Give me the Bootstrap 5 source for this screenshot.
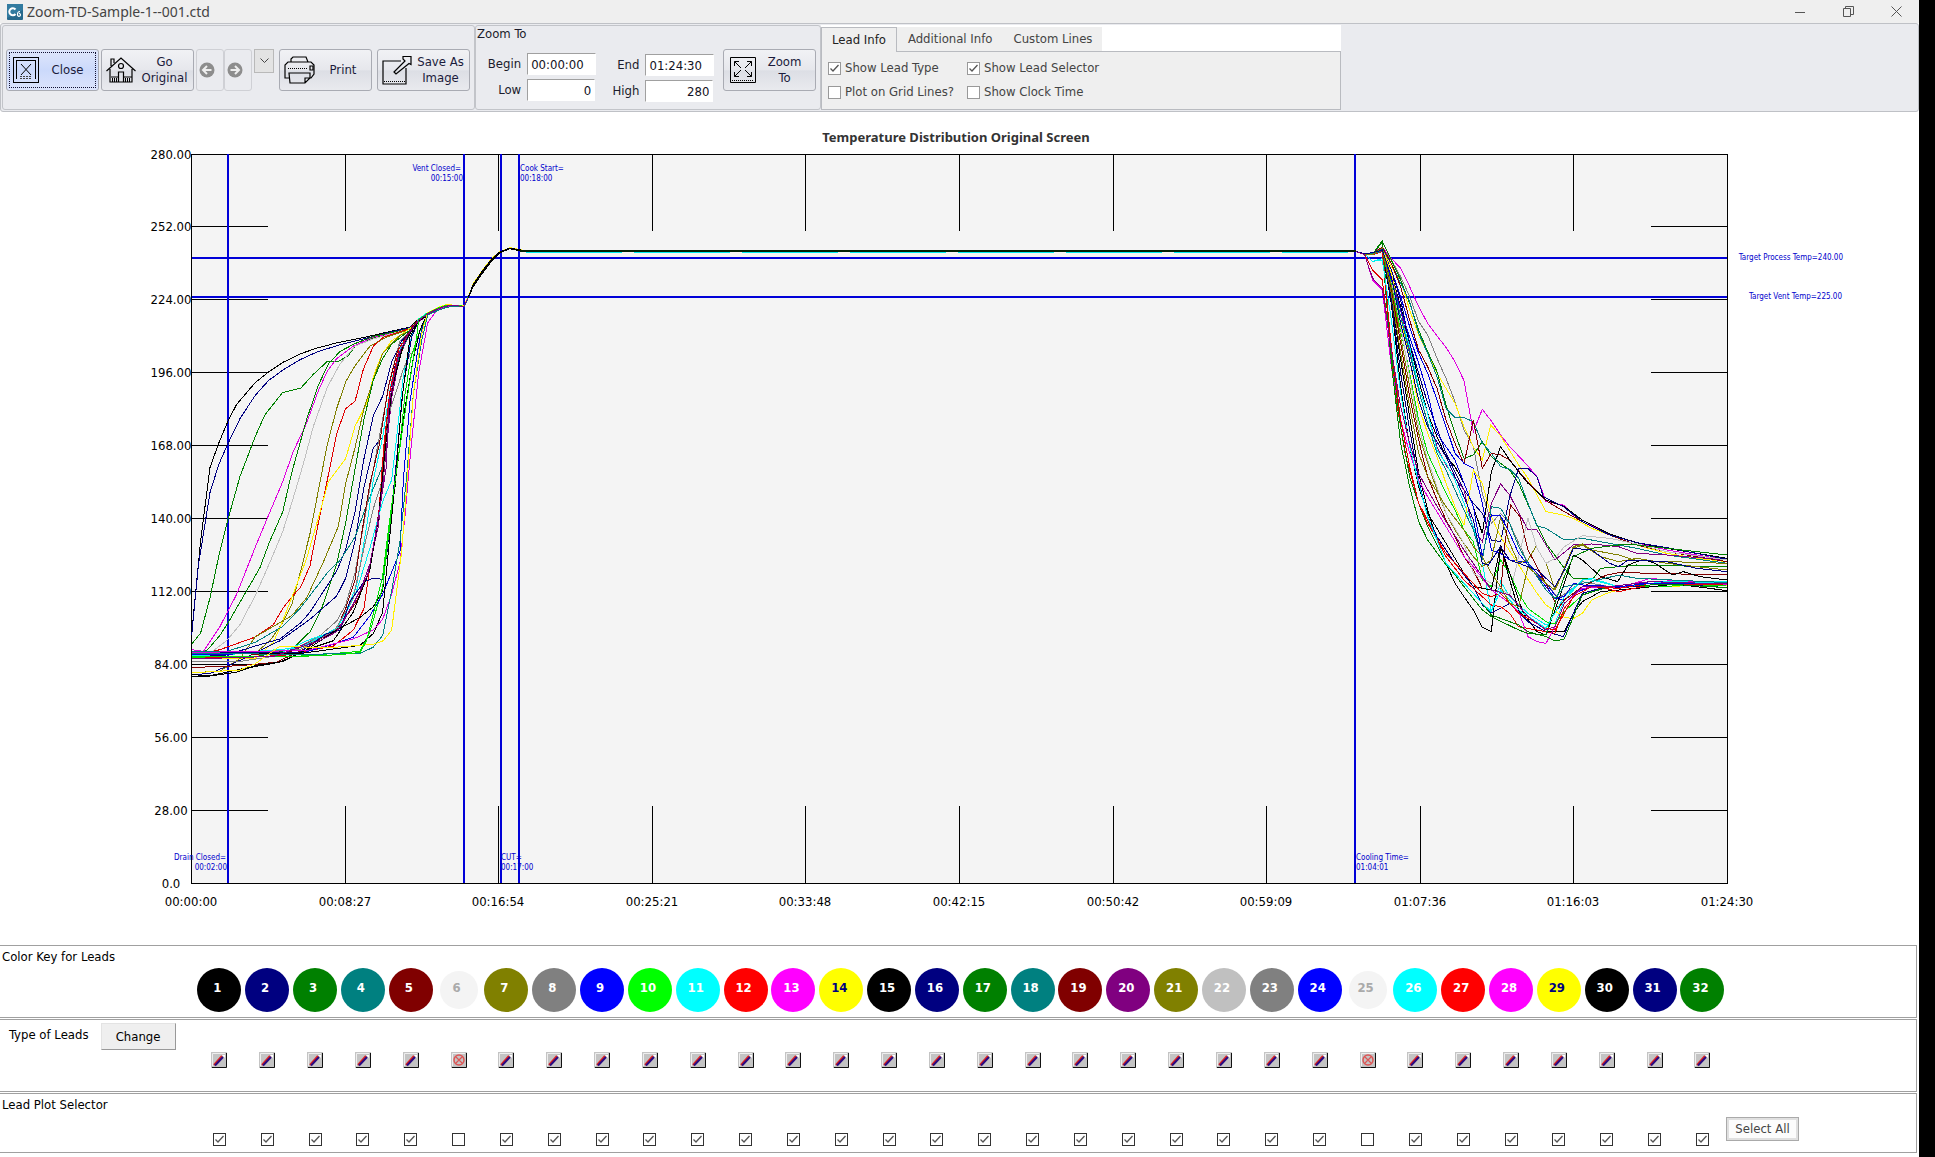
<!DOCTYPE html>
<html lang="en">
<head>
<meta charset="utf-8">
<meta name="viewport" content="width=device-width, initial-scale=1">
<title>Zoom-TD-Sample-1--001.ctd</title>
<link href="https://cdn.jsdelivr.net/npm/bootstrap@5.3.0/dist/css/bootstrap.min.css" rel="stylesheet">
<style>
body{background:#000;font-family:"DejaVu Sans Condensed","Noto Sans",sans-serif;font-size:13px;line-height:16px;color:#1b1b2b}
.app{background:#fff;margin-right:16px;min-height:100vh}
.titlebar{background:#efefef;height:23px;padding:0 16px 0 7px;font-family:"Noto Sans",sans-serif;font-size:14px;line-height:23px;color:#444}
.titlebar .win{gap:36px}
.titlebar button{border:0;background:none;padding:0;width:12px;height:18px;display:flex;align-items:center}
.toolbar{background:#eaebef;border:1px solid #bfc1c6;border-radius:3px;height:89px;padding:1px}
.group{border:1px solid #c2c4c9;border-radius:3px;height:85px}
.g-main{width:473px;padding:23px 0 0 3px}
.g-zoom{width:346px;padding:0 4px 0 1px}
.tool{height:42px;width:93px;border:1px solid #a9abb3;border-radius:3px;background:linear-gradient(#f1f2f5,#e6e7ec 50%,#dcdee5 52%,#e9eaee);padding:0 6px;display:flex;align-items:center;color:#1b1b3b;gap:4px}
.tool span{flex:1;text-align:center}
.tool svg{flex:none}
.tool.focus{background:linear-gradient(#dfe6fb,#cbd9fb 50%,#dce4fc);outline:1px dotted #113;outline-offset:-4px}
.tool.wide-ic{padding:0 4px}
.sp-s{margin-right:2px}
.sp-l{margin-right:5px}
.nav-b{width:28px;height:42px;border:1px solid #cfd0d5;border-radius:3px;background:#eaebef;padding:0;display:flex;align-items:center;justify-content:center}
.nav-b svg{margin-right:6px}
.drop{width:20px;height:24px;border:1px solid #b9b9b9;background:#e3e3e3;padding:0;display:flex;align-items:center;justify-content:center}
.fld{width:69px;height:22px;border:1px solid #fff;border-top-color:#a0a0a0;border-left-color:#a0a0a0;background:#fff;padding:0 3px;color:#112;font-size:13px;border-radius:0}
.fld.num{text-align:right;width:68px}
.fcol{display:grid;grid-template-columns:auto auto;gap:4px 6px;align-items:center;text-align:right;align-content:start}
.f1{width:130px;margin-top:11px}
.f2{width:113px;margin-top:12px}
.g-zoom .tool{margin-top:7px}
.tabs{width:520px;height:85px;background:#fff;padding-top:2px;color:#444}
.tabs .nav-link{background:#efefef;color:#444;padding:0 10px 0 11px;height:24px;line-height:23px;border:0;border-radius:0}
.tabs .nav-link.active{border:1px solid #b9bbc0;border-bottom:0;color:#222;padding:0 10px;height:25px;margin-bottom:-1px;background:#efefef;position:relative}
.tabs .pane{background:#efefef;border:1px solid #b9bbc0;height:59px;padding:8px 6px;display:grid;grid-template-columns:139px auto;gap:8px 0;align-content:start}
.ck{display:flex;align-items:center;gap:4px;white-space:nowrap}
input[type=checkbox]{appearance:none;width:13px;height:13px;margin:0;border:1px solid #999;background:#fff;flex:none}
input[type=checkbox]:checked{background:#fff url("data:image/svg+xml,%3Csvg xmlns='http://www.w3.org/2000/svg' viewBox='0 0 11 11'%3E%3Cpath d='M1.5 5.5l2.5 2.5L9.5 2' fill='none' stroke='%23555' stroke-width='1.3'/%3E%3C/svg%3E")}
.chart{display:block;width:100%;height:auto}
.chart text{font-size:13px;fill:#000}
.chart .ttl{font-weight:bold;font-size:13px;fill:#333;font-family:"Noto Sans",sans-serif}
.chart .note{font-size:8px;fill:#00c;font-family:"DejaVu Sans Condensed",sans-serif}
.grid-l{stroke:#000;shape-rendering:crispEdges}
.ev{stroke:#0000d8;stroke-width:2;shape-rendering:crispEdges}
.trace{fill:none;stroke-width:1;vector-effect:non-scaling-stroke;shape-rendering:crispEdges}
.panel{border:1px solid #a0a0a0;border-left:0;margin-right:2px;color:#000}
.p-key{height:73px;margin-bottom:1px}.p-type{height:73px;margin-bottom:1px}.p-sel{height:60px}
.panel .cap{height:22px;padding:3px 2px}
.p-type .cap{height:32px;padding:3px 9px;display:flex;gap:12px;align-items:flex-start}
.p-type .cap span{padding-top:4px}
.leads{display:grid;grid-template-columns:repeat(32,1fr);margin-left:10.2%;margin-right:9.9%;justify-items:center;align-items:center}
.dot{width:44px;height:44px;border-radius:50%;color:#fff;font-weight:bold;font-size:13px;line-height:40px;text-align:center;padding-right:4px}
.dot.off{width:38px;height:38px;background:#f4f4f4;color:#aaa;line-height:34px}
.type-b{width:16px;height:16px;padding:0;border:0;background:none;display:block;line-height:0}
.p-sel input{border-color:#333}
.btn-old{border:1px solid #e3e3e3;border-right-color:#999;border-bottom-color:#999;background:#efefef;width:75px;height:27px;font-size:13px;padding:0}
.btn-all{border:1px solid #aaa;box-shadow:inset 0 0 0 2px #e0e0e0;background:#fcfcfc;width:73px;height:24px;padding:0;color:#444;font-size:13px;margin-top:1px}
.sel-row{display:grid;grid-template-columns:minmax(0,1fr)}
.sel-row>*{grid-area:1/1}
.sel-row .btn-all{justify-self:end;margin-right:117px}
.sel-row .leads{margin-top:17px}
</style>
<script src="https://cdn.jsdelivr.net/npm/bootstrap@5.3.0/dist/js/bootstrap.bundle.min.js"></script>
</head>
<body>
<div class="app">
<header class="titlebar d-flex align-items-center">
<svg width="16" height="16" viewBox="0 0 16 16" class="me-1" aria-hidden="true"><rect width="16" height="16" rx="1" fill="#27698c"/><path d="M0 0h16v6L0 14z" fill="#327ba0"/><path d="M8.500 5.500A3.500 3.500 0 1 0 8.500 10" fill="none" stroke="#fff" stroke-width="2"/><path d="M13 7.500c-2 0-2.500 1.500-2.500 3a1.500 1.500 0 1 0 1.500-1.200" fill="none" stroke="#fff" stroke-width="1.200"/></svg>
<span class="me-auto">Zoom-TD-Sample-1--001.ctd</span>
<div class="win d-flex">
<button aria-label="Minimize"><svg width="11" height="11"><path d="M0 6.500h10" stroke="#555"/></svg></button>
<button aria-label="Restore"><svg width="11" height="11" fill="none" stroke="#555"><path d="M.5 2.500h7v8h-7zM2.500 2.500v-2h8v8h-3"/></svg></button>
<button aria-label="Close window"><svg width="11" height="11" stroke="#555"><path d="M.5.5l10 10M10.500.5l-10 10"/></svg></button>
</div>
</header>
<div class="toolbar d-flex">
<div class="group g-main d-flex align-items-start">
<button class="tool focus sp-s"><svg width="26" height="26" viewBox="0 0 26 26" fill="none" stroke="#000" shape-rendering="crispEdges"><path d="M.5.5h25v25H.5z"/><path d="M3.500 22V3.500h19V22"/><path d="M8 7l10 11M18 7L8 18" shape-rendering="auto"/><path d="M7 21.500h12M7 19.500h12" stroke-dasharray="2 1" stroke="#444"/></svg><span>Close</span></button>
<button class="tool wide-ic sp-s"><svg width="30" height="26" viewBox="0 0 30 26" fill="none" stroke="#000" stroke-width="1.200"><path d="M.5 14L15 1l14.500 13M4 12v13h22V12M5 9V2h3v4M12.500 25V15h5v10"/><circle cx="15" cy="9" r="2.500"/><path d="M5 20h7m6 0h8"/><path d="M6 23h6m7 0h6" stroke-width="4" stroke-dasharray="1 1"/></svg><span>Go Original</span></button>
<button class="nav-b" aria-label="Back"><svg width="16" height="16"><circle cx="8" cy="8" r="7.500" fill="#8d8d8d"/><path d="M12.500 8H4.500M8 4L4 8l4 4" fill="none" stroke="#eee" stroke-width="2"/></svg></button>
<button class="nav-b sp-s" aria-label="Forward"><svg width="16" height="16"><circle cx="8" cy="8" r="7.500" fill="#8d8d8d"/><path d="M3.500 8h8M8 4l4 4-4 4" fill="none" stroke="#eee" stroke-width="2"/></svg></button>
<button class="drop sp-l" aria-label="More"><svg width="9" height="6"><path d="M.5.5l4 4 4-4" fill="none" stroke="#444"/></svg></button>
<button class="tool wide-ic sp-l"><svg width="31" height="28" viewBox="0 0 31 28" fill="none" stroke="#000" stroke-width="1.200"><path d="M7 6V3l2-2h13l2 5M7 6h17M5 22H1V9l3-3h23l3 3v9l-3 4h-2M5 17h21v5l-5 5H6zM21 27v-5h5"/><path d="M4 12.500h20" stroke-dasharray="1 1"/><path d="M26 10h3v4h-3z"/></svg><span>Print</span></button>
<button class="tool wide-ic"><svg width="30" height="30" viewBox="0 0 30 30" fill="none" stroke="#000" stroke-width="1.200"><path d="M19 6H1v23h23V13"/><path d="M12 17l11-11-2-2 0-2.500h8v8l-2-1L14 19z"/><path d="M2 26.500h21" stroke-dasharray="1 1"/></svg><span>Save As Image</span></button>
</div>
<div class="group g-zoom">
<div>Zoom To</div>
<div class="d-flex align-items-start">
<div class="fcol f1"><label for="b">Begin</label><input id="b" class="fld" value="00:00:00"><label for="l">Low</label><input id="l" class="fld num" value="0"></div>
<div class="fcol f2"><label for="e">End</label><input id="e" class="fld" value="01:24:30"><label for="h">High</label><input id="h" class="fld num" value="280"></div>
<button class="tool ms-auto"><svg width="26" height="26" viewBox="0 0 26 26" fill="none" stroke="#000"><path d="M.5.5h25v25H.5z"/><path d="M4.500 9V4.500H9M4.500 4.500L11 11M17 4.500h4.500V9M21.500 4.500L15 11M4.500 15v4.500H9M4.500 19.500L11 13M21.500 15v4.500H17M21.500 19.500L15 13"/><path d="M2 23.500h22" stroke-dasharray="1 1"/></svg><span>Zoom To</span></button>
</div>
</div>
<div class="tabs">
<nav class="nav flex-nowrap"><a class="nav-link active" href="#">Lead Info</a><a class="nav-link" href="#">Additional Info</a><a class="nav-link" href="#">Custom Lines</a></nav>
<div class="pane"><label class="ck"><input type="checkbox" checked>Show Lead Type</label><label class="ck"><input type="checkbox" checked>Show Lead Selector</label><label class="ck"><input type="checkbox">Plot on Grid Lines?</label><label class="ck"><input type="checkbox">Show Clock Time</label></div>
</div>
</div>
<main>
<svg class="chart" id="chart" viewBox="0 112 1919 833" role="img" aria-label="Temperature Distribution Original Screen">
<text class="ttl" x="956" y="142" text-anchor="middle">Temperature Distribution Original Screen</text>
<rect x="191.500" y="154.500" width="1536" height="729" fill="#f4f4f4" class="grid-l"/>
<g id="axes"></g>
<g class="ev"><path d="M228 154v729M464 154v729M501 154v729M519 154v729M1355 154v729M192 258H1727M192 297H1727"/></g>
<g id="left" transform="translate(140 130) scale(.33333 .35714)"></g>
<g id="right" transform="translate(1330 220) scale(.33333)"></g>
<g id="plateau"></g>
<g>
<text class="note" x="461" y="171" text-anchor="end">Vent Closed=</text><text class="note" x="463" y="181" text-anchor="end">00:15:00</text>
<text class="note" x="520" y="171">Cook Start=</text><text class="note" x="520" y="181">00:18:00</text>
<text class="note" x="226" y="860" text-anchor="end">Drain Closed=</text><text class="note" x="227" y="870" text-anchor="end">00:02:00</text>
<text class="note" x="501" y="860">CUT=</text><text class="note" x="501" y="870">00:17:00</text>
<text class="note" x="1356" y="860">Cooling Time=</text><text class="note" x="1356" y="870">01:04:01</text>
<text class="note" x="1843" y="260" text-anchor="end">Target Process Temp=240.00</text>
<text class="note" x="1842" y="299" text-anchor="end">Target Vent Temp=225.00</text>
</g>
</svg>
</main>
<section class="panel p-key"><div class="cap">Color Key for Leads</div><div class="leads" id="dots"></div></section>
<section class="panel p-type"><div class="cap"><span>Type of Leads</span><button class="btn-old">Change</button></div><div class="leads" id="types"></div></section>
<section class="panel p-sel"><div class="cap">Lead Plot Selector</div><div class="sel-row"><div class="leads" id="checks"></div><button class="btn-all">Select All</button></div></section>
</div>
<script>
const $=id=>document.getElementById(id);
// lead key
const col=['#000','#000080','#008000','#008080','#800000','','#808000','#808080','#00f','#0f0','#0ff','#f00','#f0f','#ff0','#000','#000080','#008000','#008080','#800000','#800080','#808000','#c0c0c0','#808080','#00f','','#0ff','#f00','#f0f','#ff0','#000','#000080','#008000'];
let d='',t='',c='';
col.forEach((k,i)=>{
 const n=i+1;
 d+=k?`<div class="dot" style="background:${k}${k=='#ff0'?';color:#000080':''}">${n}</div>`:`<div class="dot off">${n}</div>`;
 t+=`<button class="type-b" aria-label="Type of lead ${n}"><svg width="16" height="16"><path d="M0 0h16v16H0z" fill="#c4c4c4"/><path d="M1 15.500h14.500V1" fill="none" stroke="#111"/><path d="M1.500 14V1.500H14" fill="none" stroke="#eee"/>`+
 (k?`<path d="M3 13L11 4" stroke="#d22" stroke-width="2"/><path d="M4 13.500L12 5" stroke="#2a0a80" stroke-width="2"/><path d="M11 3h3v3z" fill="#fff"/>`:`<circle cx="8" cy="8" r="5" fill="none" stroke="#d55" stroke-width="1.500"/><path d="M5 5l6 6M11 5l-6 6" stroke="#d55" stroke-width="1.200"/>`)+`</svg></button>`;
 c+=`<input type="checkbox" aria-label="Plot lead ${n}" ${k?'checked':''}>`;
});
$('dots').innerHTML=d;$('types').innerHTML=t;$('checks').innerHTML=c;
// axes
let a='',p='';
for(let i=0;i<=10;i++){
 const y=Math.floor(883-72.9*i)+.5,x=Math.round(191+153.6*i)+.5;
 a+=`<text x="171" y="${y+4}" text-anchor="middle">${i?(28*i).toFixed(2):'0.0'}</text>`;
 if(i&&i<10)p+=`M191 ${y}H268M1651 ${y}H1727M${x} 154V231M${x} 806V883`;
}
['00:00:00','00:08:27','00:16:54','00:25:21','00:33:48','00:42:15','00:50:42','00:59:09','01:07:36','01:16:03','01:24:30'].forEach((s,i)=>a+=`<text x="${Math.round(191+153.6*i)}" y="906" text-anchor="middle">${s}</text>`);
$('axes').innerHTML=`<path class="grid-l" d="${p}"/>`+a;
// traces of the heating phase
const K='#000',N='#000080',G='#008000',T='#008080',M='#800000',O='#808000',Y='#808080',B='#0000e0',L='#00e000',C='#00f0f0',R='#e00000',F='#e000e0',W='#fff000',P='#800080',S='#c0c0c0';
const line=(k,pts)=>`<polyline class="trace" stroke="${k}" points="${pts}"/>`;
// the leads run together here, a few tenths of a degree apart
const joinPts=[[836,533],[863,515],[891,502],[918,493],[945,492],[972,494],[985,468],[1000,434],[1028,396],[1055,363],[1080,342],[1110,331],[1137,336],[1165,340]];
const join=o=>joinPts.map(([x,y],i)=>` ${x},${y+(i<4||(i>6&&i<10)?o*2:o*.7)}`).join('');
const heat=[
[K,'155,1410 182,1150 210,945 237,875 264,815 290,768 345,708 385,678 430,650 480,627 530,611 590,596 645,586 700,575 755,563 810,552'],
[N,'155,1415 175,1220 210,1015 237,935 264,878 300,808 345,744 385,702 430,671 480,643 530,622 590,604 645,591 700,578 755,565 810,553'],
[G,'155,1440 182,1408 210,1310 237,1190 264,1090 300,970 345,860 375,797 428,735 482,723 520,684 562,648 595,648 625,632 645,605 700,582 810,555'],
[F,'155,1455 190,1460 240,1390 290,1300 345,1170 385,1080 428,985 460,900 500,820 535,730 562,675 590,640 640,605 700,580 810,556'],
[G,'155,1465 200,1458 240,1415 264,1380 320,1290 360,1225 390,1150 428,1070 455,960 500,810 535,715 565,655 600,620 645,598 700,578 810,556'],
[S,'155,1470 210,1465 260,1430 300,1385 345,1305 390,1210 428,1125 455,1045 490,935 520,830 562,720 600,655 645,605 700,585 810,556'],
[O,'155,1470 240,1470 350,1462 390,1430 428,1380 455,1330 482,1235 510,1130 535,1010 562,880 590,780 617,705 645,660 690,605 740,580 810,558'],
[R,'155,1475 240,1455 345,1420 400,1385 428,1340 455,1308 482,1280 510,1220 535,1100 562,980 590,850 617,780 645,760 670,670 700,605 730,580 810,556'],
[W,'155,1480 345,1480 400,1435 428,1375 455,1310 500,1200 540,1070 565,985 617,920 645,830 680,765 700,690 725,630 755,590 810,556'],
[O,'155,1520 240,1515 300,1480 345,1420 400,1390 455,1360 500,1310 550,1210 595,1110 617,990 645,890 672,780 700,700 728,625 780,575 810,562'],
[G,'155,1475 345,1475 455,1455 510,1405 545,1340 590,1215 617,1100 645,950 672,810 700,700 728,640 755,600 810,560'],
[N,'155,1475 260,1470 345,1445 420,1425 482,1380 510,1350 590,1235 617,1175 645,1070 672,920 700,800 728,745 755,650 785,590 810,568'],
[N,'155,1525 210,1522 300,1485 420,1430 510,1370 590,1305 617,1255 645,1150 672,1000 700,890 728,860 745,760 765,660 800,585 820,555'],
[T,'155,1460 260,1460 345,1435 428,1390 480,1340 562,1240 600,1205 645,1140 680,1050 728,940 745,800 775,640 810,570'],
[Y,'155,1488 300,1488 428,1470 535,1420 590,1375 617,1330 645,1240 672,1100 690,1000 718,860 750,700 780,590 810,565'],
[M,'155,1505 300,1500 410,1490 500,1450 590,1395 617,1340 645,1260 665,1130 690,990 718,880 745,720 772,620 800,575'],
[C,'155,1472 428,1462 500,1430 590,1400 617,1350 650,1275 680,1110 700,980 728,860 755,700 785,600 810,570'],
[M,'155,1462 428,1470 540,1425 590,1400 650,1320 690,1230 718,1060 740,820 765,680 800,580'],
[R,'155,1478 428,1472 580,1445 640,1400 672,1340 690,1220 715,1090 732,880 750,730 778,610 810,570'],
[P,'155,1467 428,1465 560,1415 600,1395 660,1290 690,1215 715,1110 735,930 755,750 782,620 812,565'],
[C,'155,1474 480,1450 600,1390 650,1290 690,1170 728,1040 755,980 770,860 790,690 815,575'],
[Y,'155,1470 480,1455 585,1400 640,1310 672,1170 700,1060 728,980 745,800 790,670 810,628 836,610 850,550'],
[N,'155,1465 480,1462 560,1410 600,1400 630,1320 672,1265 700,1255 728,1258 740,1190 755,1060 772,900 790,720 815,580'],
[K,'155,1525 210,1528 300,1510 420,1490 500,1455 590,1400 660,1365 700,1335 728,1290 740,1160 765,1000 785,760 810,580'],
[L,'155,1476 480,1473 660,1460 690,1405 728,1280 745,1140 780,880 795,740 812,640 836,570'],
[B,'155,1468 480,1466 580,1440 640,1420 690,1360 728,1300 780,1180 790,980 810,760 836,600 850,540'],
[K,'155,1464 480,1466 660,1443 700,1410 728,1350 745,1180 765,990 795,780 820,640 840,560'],
[K,'155,1529 200,1530 290,1518 345,1500 430,1488 500,1455 580,1430 640,1350 690,1230 715,1090 735,900 755,730 790,600'],
[F,'155,1464 300,1460 500,1458 640,1425 700,1400 728,1370 755,1300 780,1210 795,1080 812,900 836,680 863,540'],
[T,'155,1466 480,1468 660,1466 700,1448 728,1415 755,1290 780,1150 800,970 820,740 845,590'],
[W,'155,1520 300,1512 345,1495 420,1445 560,1450 700,1440 730,1430 755,1400 770,1290 785,1180 800,1000 820,740 845,570'],
[L,'155,1474 480,1474 600,1469 660,1463 680,1430 728,1250 745,1120 770,950 800,760 830,580'],
[P,'155,1481 400,1474 540,1430 590,1405 645,1320 685,1240 705,1140 738,950 748,760 775,630 805,570']
];
$('left').innerHTML=heat.map((h,i)=>{
 const last=+h[1].split(' ').pop().split(',')[0];
 return line(h[0],h[1]+join(i%5-2).split(' ').filter(q=>q&&+q.split(',')[0]>last).map(q=>' '+q).join(''));
}).join('')+[-1,0,2].map(o=>line(K,join(o).split(' ').slice(7).join(' '))).join('');
// traces of the cooling phase
const cool=[
[F,'82 184,115 212,145 239,200 266,260 293,310 321,348 348,382 375,425 402,482 430,635 457,568 484,603 512,645 539,680 566,708 594,738 621,770 648,845 700,855 730,885 757,905 839,943 920,968 1010,990 1100,1005 1192,1020'],
[Y,'85 184,120 212,170 239,230 266,305 293,345 321,415 348,475 375,545 402,630 430,680 457,820 484,910 512,880 539,910 594,1030 648,1090 685,1135 720,1110 757,1085 839,1100 920,1100 1000,1090 1192,1092'],
[W,'92 184,140 212,180 239,270 266,345 293,400 321,460 348,505 375,550 402,620 430,680 457,720 482,615 512,648 566,735 594,775 621,825 648,875 700,885 730,895 785,925 839,945 920,975 1010,1000 1100,1015 1192,1025'],
[G,'65 184,120 212,180 239,250 266,330 293,395 321,455 348,555 375,640 402,715 430,705 457,665 484,710 512,730 539,750 566,790 621,915 648,970 703,1045 730,1075 790,1075 812,1045 866,1040 920,1035 1060,1038 1192,1040'],
[T,'90 184,130 212,190 239,245 266,340 293,400 321,470 348,565 375,592 402,593 430,605 457,670 484,700 512,740 539,748 566,775 594,850 621,918 648,925 703,960 757,955 839,970 920,985 1010,1005 1192,1030'],
[M,'82 184,130 212,200 239,300 266,390 293,440 321,505 348,600 375,670 402,732 430,600 457,745 484,700 512,705 539,720 575,765 621,815 645,840 703,875 757,905 839,945 920,975 1010,995 1192,1025'],
[B,'88 184,150 212,230 239,320 266,400 293,460 321,540 348,620 375,700 402,730 430,745 457,850 484,990 512,1000 539,1020 594,1028 648,1090 685,1138 703,1140 730,1120 785,1100 866,1105 960,1085 1192,1090'],
[K,'85 184,160 212,260 239,370 266,480 293,580 321,650 348,710 375,740 402,790 430,860 457,940 484,755 512,680 539,720 566,755 594,790 648,840 703,860 757,900 839,942 920,968 1010,985 1100,1000 1192,1015'],
[N,'90 184,150 212,240 239,370 266,460 293,550 321,625 348,700 375,755 402,810 430,850 457,880 484,960 512,965 539,830 566,745 594,746 621,770 640,830 700,860 757,905 839,945 920,968 1010,983 1192,1018'],
[P,'86 184,160 212,270 239,390 266,500 293,580 321,680 348,735 402,810 430,930 457,965 484,850 512,792 539,825 594,930 621,930 675,1020 730,975 785,972 866,980 920,1000 1010,1005 1192,1020'],
[C,'116 184,200 212,290 239,380 266,500 293,580 321,690 348,730 375,780 402,850 430,920 457,1030 484,1175 512,1085 539,1130 594,1180 648,1215 675,1210 703,1140 757,1080 785,1075 866,1100 960,1090 1192,1085'],
[W,'84 184,160 212,290 239,420 266,560 293,640 321,710 348,790 375,860 402,915 430,750 457,790 484,890 512,950 566,1035 621,1120 648,1155 703,1192 730,1196 757,1180 785,1140 830,1120 866,1110 960,1100 1192,1095'],
[L,'88 184,190 212,330 239,460 266,600 293,700 348,820 375,870 402,930 430,965 457,1080 484,1100 512,1020 539,1060 566,1120 594,1165 648,1205 675,1212 703,1175 757,1125 812,1105 920,1100 1192,1095'],
[O,'86 184,200 212,350 239,500 266,640 293,730 321,810 348,880 375,930 402,970 430,1010 457,1040 484,1020 512,890 539,970 566,1030 594,1020 618,980 648,1030 675,1110 730,980 757,972 785,990 866,1005 920,1022 1192,1030'],
[M,'90 184,210 212,370 239,530 266,660 293,770 321,840 348,900 375,950 402,1010 430,1050 457,1105 484,1110 512,1115 525,970 542,855 570,890 594,990 621,1040 685,1165 703,1140 757,1100 830,1065 870,1057 960,1060 1192,1065'],
[S,'84 184,180 212,320 239,470 266,620 293,720 321,800 348,880 402,970 430,1060 484,1090 539,1125 566,1010 594,895 621,985 648,1030 675,1015 703,980 757,947 839,955 920,972 1010,995 1192,1020'],
[K,'90 184,230 212,420 239,590 266,760 293,870 321,960 348,1030 375,1090 402,1130 430,1170 457,1222 484,1235 500,1090 512,980 539,1060 580,1180 621,1235 648,1245 675,1170 703,1090 730,1005 757,1020 812,1070 863,1085 894,1035 940,1018 975,1030 1028,1065 1060,1055 1110,1070 1192,1080'],
[K,'95 184,250 212,500 239,680 266,800 293,880 348,970 402,1060 430,1100 484,1110 512,975 539,1080 566,1170 594,1205 648,1235 703,1235 730,1180 757,1145 812,1115 920,1105 1010,1095 1060,1095 1192,1112'],
[N,'88 184,240 212,460 239,630 266,780 293,890 321,950 375,1030 430,1100 457,1155 484,1178 512,1165 539,1150 594,1205 648,1235 700,1250 730,1180 757,1120 812,1105 920,1100 1000,1090 1192,1103'],
[R,'180 184,410 200,550 225,700 266,850 293,900 321,960 348,1010 402,1080 457,1130 484,1155 512,1160 539,1180 566,1220 675,1240 703,1165 757,1100 790,1095 866,1115 960,1095 1192,1092'],
[F,'210 184,440 212,600 239,700 266,780 293,830 348,920 402,1010 430,1040 484,1110 539,1150 566,1175 594,1250 621,1265 648,1270 675,1220 703,1150 757,1105 812,1100 866,1105 960,1075 1010,1080 1192,1093'],
[G,'85 184,430 212,670 239,800 266,905 293,960 348,1035 402,1090 457,1150 484,1185 566,1215 594,1235 648,1250 675,1263 703,1257 730,1190 757,1125 839,1100 960,1095 1060,1095 1192,1103'],
[G,'62 184,400 212,620 239,770 266,850 293,920 348,1030 402,1100 457,1170 484,1190 566,1230 594,1240 648,1245 675,1150 703,1070 730,1010 785,985 866,975 920,975 1010,985 1192,1005'],
[R,'95 184,380 212,600 239,740 266,850 293,910 348,1000 402,1060 457,1120 484,1130 512,1120 539,1150 566,1180 648,1225 675,1230 703,1180 730,1130 785,1100 866,1105 960,1090 1192,1090'],
[C,'120 184,300 212,520 239,680 266,790 293,890 321,960 348,1030 402,1090 457,1150 484,1175 512,1110 566,1170 648,1225 703,1130 757,1080 785,1080 866,1100 1010,1085 1192,1088'],
[B,'88 184,180 212,270 239,350 266,430 293,520 321,640 348,680 375,720 402,790 430,860 457,1010 484,885 512,888 539,940 566,1000 594,1035 648,1100 675,1135 703,1130 730,1090 757,1095 866,1100 960,1090 1192,1090'],
[T,'92 184,170 212,290 239,400 266,510 293,610 321,700 348,750 375,810 402,870 430,930 457,1020 484,860 512,865 539,910 566,980 594,1030 648,1110 675,1135 703,1100 785,1085 866,1065 920,1075 1192,1088'],
[O,'84 184,220 212,400 239,560 266,700 293,770 348,860 402,930 430,980 457,1010 484,1060 512,1100 539,1150 566,1160 594,1040 648,1090 675,1110 703,1050 730,985 757,975 812,1010 866,1025 920,1015 1010,1030 1192,1050'],
[N,'90 184,170 212,310 239,420 266,540 293,620 348,710 402,830 430,900 457,1030 475,1035 512,980 539,1020 621,1050 675,1100 703,1050 730,985 785,990 839,1030 866,1040 894,1020 1010,1025 1100,1045 1192,1055'],
[P,'205 184,390 212,560 239,670 266,760 293,810 348,905 402,990 457,1070 484,1110 539,1125 594,1190 648,1230 675,1220 703,1150 757,1100 839,1100 960,1085 1192,1092']
];
$('right').innerHTML=cool.map((h,i)=>{
 const y=parseInt(h[1]),mid=y>150?y-30:y>100?124:98+i%4*2;
 return line(h[0],`75,94 103,${101+i%2*2} 128,${mid} 157,`+h[1]);
}).join('');
// cook plateau, all leads within about one degree
let pl='';
[[F,-1,11,K],[G,-1,5],[T,0,7],[C,1,9],[K,0,0],[K,0,13]].forEach(([k,o,m])=>{
 let s='';for(let i=0,x=520;x<=1356;x+=12,i++)s+=x+','+(251+o+(o<0&&i%m>2?1:0)-(o>=0&&m&&i%m==0?1:0)+.5)+' ';
 pl+=`<polyline class="trace" stroke="${k}" points="${s}"/>`;
});
pl+='<path d="M520 251H1356" stroke="#032003" stroke-width="2" shape-rendering="crispEdges"/>';
$('plateau').innerHTML=pl;
</script>
</body>
</html>
